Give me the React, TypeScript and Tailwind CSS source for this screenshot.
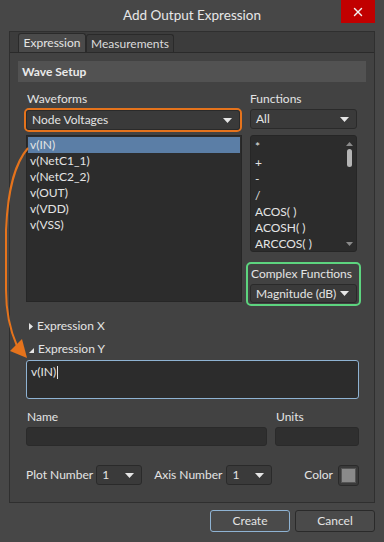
import { X } from "lucide-react";

const caret = (
  <svg width="9" height="5" viewBox="0 0 9 5" className="shrink-0">
    <path d="M0 0 H9 L4.5 5 Z" fill="#e6e6e6" />
  </svg>
);

function Dropdown({ value, className }: { value: string; className: string }) {
  return (
    <div
      className={`flex items-center justify-between rounded-[3px] border border-[#2a2a2a] bg-[#3a3a3a] pl-[5px] pr-[7px] ${className}`}
    >
      <span>{value}</span>
      {caret}
    </div>
  );
}

const waveforms = ["v(IN)", "v(NetC1_1)", "v(NetC2_2)", "v(OUT)", "v(VDD)", "v(VSS)"];
const functions = ["*", "+", "-", "/", "ACOS( )", "ACOSH( )", "ARCCOS( )"];

export default function App() {
  return (
    <div className="relative h-[542px] w-[384px] overflow-hidden whitespace-nowrap bg-[#474747] font-['Lato',sans-serif] text-[12px] leading-none text-[#e4e4e4]">
      {/* Title bar */}
      <div className="relative flex h-[31px] items-center justify-center pt-[1px] text-[13.5px] text-[#e8e8e8]">
        Add Output Expression
        <div className="absolute right-[9px] top-0 flex h-[23px] w-[34px] items-center justify-center bg-[#c10000]">
          <X size={14} strokeWidth={2.5} color="#f2f2f2" />
        </div>
      </div>

      {/* Tab control */}
      <div className="mx-[9px] border border-[#2f2f2f] bg-[#3c3c3c]">
        <div className="flex h-[20px] items-end pl-[8px]">
          <div className="flex h-[19px] w-[68px] items-center justify-center rounded-t-[3px] border border-b-0 border-[#2a2a2a] bg-[#4a4a4a]">
            Expression
          </div>
          <div className="flex h-[18px] w-[88px] items-center justify-center rounded-t-[3px] border border-b-0 border-[#2a2a2a] bg-[#3a3a3a] text-[#dcdcdc]">
            Measurements
          </div>
        </div>

        {/* Panel */}
        <div className="border-t border-[#2a2a2a] bg-[#424242] px-[8px] pb-[17px] pt-[8px]">
          <div className="flex h-[21px] items-center bg-[#525252] pl-[4px] font-bold text-[#eaeaea]">
            Wave Setup
          </div>

          <div className="mt-[10px] flex pl-[6px]">
            {/* Waveforms column */}
            <div className="w-[218px]">
              <div className="flex h-[16px] items-start pl-[3px] pt-[1px]">Waveforms</div>
              <div className="h-[24px] rounded-[5px] border-2 border-[#e5731c] p-0">
                <Dropdown value="Node Voltages" className="h-[20px]" />
              </div>
              <div className="ml-[2px] mt-[3px] h-[167px] w-[216px] border border-[#262626] bg-[#2c2c2c] p-[1px]">
                {waveforms.map((w, i) => (
                  <div
                    key={w}
                    className={`flex h-[16px] items-center pl-[2px] ${i === 0 ? "bg-[#5b7ea6]" : ""}`}
                  >
                    {w}
                  </div>
                ))}
              </div>
            </div>

            {/* Functions column */}
            <div className="ml-[4px] w-[115px]">
              <div className="flex h-[16px] items-start pl-[4px] pt-[1px]">Functions</div>
              <Dropdown value="All" className="mx-[4px] mt-[1px] h-[20px]" />
              <div className="relative mx-[4px] mt-[6px] h-[117px] rounded-[3px] border border-[#262626] bg-[#2c2c2c] pl-[4px] pt-[3px]">
                {functions.map((f) => (
                  <div key={f} className="flex h-[16.2px] items-center">
                    {f}
                  </div>
                ))}
                {/* scrollbar */}
                <div className="absolute right-[2px] top-[4px] flex h-[107px] w-[9px] flex-col items-center">
                  <svg width="7" height="4" viewBox="0 0 7 4" className="mt-[2px]">
                    <path d="M0 4 L3.5 0 L7 4 Z" fill="#8a8a8a" />
                  </svg>
                  <div className="mt-[3px] h-[18px] w-[5px] rounded-full bg-[#b5b5b5]" />
                  <div className="flex-1" />
                  <svg width="7" height="4" viewBox="0 0 7 4" className="mb-[1px]">
                    <path d="M0 0 L7 0 L3.5 4 Z" fill="#8a8a8a" />
                  </svg>
                </div>
              </div>
              <div className="mt-[10px] h-[44px] rounded-[5px] border-2 border-[#5dd47f] px-[2px] pt-[3px]">
                <div className="h-[16px] pl-[1px] pt-[1px]">Complex Functions</div>
                <Dropdown value="Magnitude (dB)" className="mt-[1px] h-[19px]" />
              </div>
            </div>
          </div>

          {/* Expressions */}
          <div className="mt-[13px] flex h-[14px] items-center pl-[11px]">
            <svg width="4" height="7" viewBox="0 0 4 7" className="mr-[4px]">
              <path d="M0 0 L4 3.5 L0 7 Z" fill="#e6e6e6" />
            </svg>
            Expression X
          </div>
          <div className="mt-[9px] flex h-[14px] items-center pl-[11px]">
            <svg width="5" height="5" viewBox="0 0 5 5" className="mr-[4px] mt-[2px]">
              <path d="M5 0 L5 5 L0 5 Z" fill="#e6e6e6" />
            </svg>
            Expression Y
          </div>
          <div className="ml-[8px] mr-[7px] mt-[4px] h-[39px] rounded-[3px] border border-[#8fb3d3] bg-[#2c2c2c] pl-[4px] pt-[5px]">
            <span>v(IN)</span>
            <span className="ml-[1px] inline-block h-[13px] w-px bg-[#e4e4e4] align-middle" />
          </div>

          {/* Name / Units */}
          <div className="mt-[11px] flex h-[14px] items-center pl-[9px]">
            <span className="w-[249px]">Name</span>
            <span>Units</span>
          </div>
          <div className="mt-[3px] flex pl-[8px] pr-[7px]">
            <div className="h-[19px] w-[241px] rounded-[3px] border border-[#2a2a2a] bg-[#2f2f2f]" />
            <div className="ml-[8px] h-[19px] flex-1 rounded-[3px] border border-[#2a2a2a] bg-[#2f2f2f]" />
          </div>

          {/* Plot / Axis / Color */}
          <div className="mt-[19px] flex h-[20px] items-center pl-[8px] pr-[7px]">
            <span>Plot Number</span>
            <Dropdown value="1" className="ml-[3px] h-[20px] w-[46px]" />
            <span className="ml-[12px]">Axis Number</span>
            <Dropdown value="1" className="ml-[4px] h-[20px] w-[46px]" />
            <div className="flex-1" />
            <span>Color</span>
            <div className="ml-[5px] flex h-[21px] w-[21px] items-center justify-center rounded-[3px] border border-[#2a2a2a] bg-[#3a3a3a]">
              <div className="h-[15px] w-[15px] border border-[#555] bg-[#8a8a8a]" />
            </div>
          </div>
        </div>
      </div>

      {/* Buttons */}
      <div className="mt-[7px] flex justify-end gap-[5px] pr-[9px]">
        <div className="flex h-[22px] w-[80px] items-center justify-center rounded-[3px] border border-[#8fb3d3] bg-[#4a4a4a]">
          Create
        </div>
        <div className="flex h-[22px] w-[80px] items-center justify-center rounded-[3px] border border-[#2a2a2a] bg-[#4a4a4a]">
          Cancel
        </div>
      </div>

      {/* Orange callout arrow */}
      <svg className="pointer-events-none absolute left-0 top-0" width="384" height="542">
        <path
          d="M28 148 C16 162 8 185 6 230 L6 290 C6 312 10 330 17 346"
          fill="none"
          stroke="#e5731c"
          strokeWidth="2"
        />
        <path d="M10 351 L22 339 L27 358 Z" fill="#e5731c" />
      </svg>
    </div>
  );
}
